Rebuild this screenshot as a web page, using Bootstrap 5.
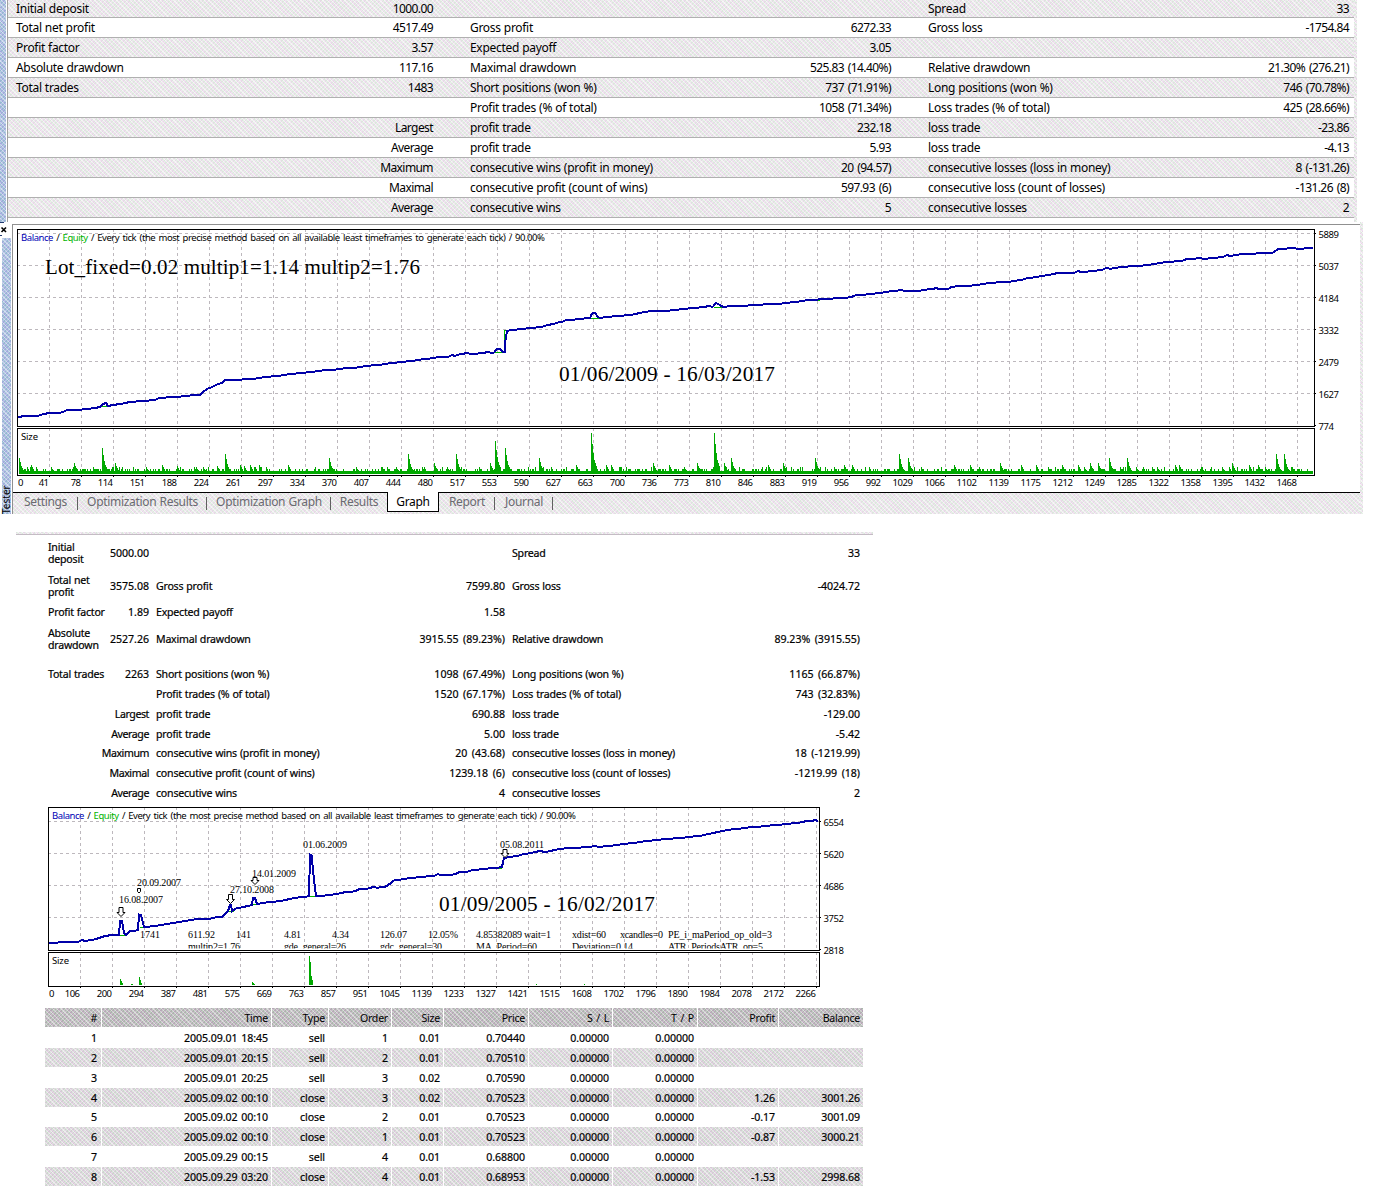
<!DOCTYPE html>
<html lang="en">
<head>
    <meta charset="UTF-8">
    <meta name="viewport" content="width=device-width, initial-scale=1.0">
    <title>Strategy Tester Report</title>
    <link href="https://cdn.jsdelivr.net/npm/bootstrap@5.3.0/dist/css/bootstrap.min.css" rel="stylesheet">
    <style>
        :root {
            --weave: repeating-linear-gradient(45deg, rgba(255, 185, 255, .2) 0 1.1px, rgba(195, 255, 200, .2) 1.1px 2.2px, rgba(255, 255, 255, .5) 2.2px 3.1px),
                     repeating-linear-gradient(135deg, rgba(0, 0, 0, .03) 0 1.3px, rgba(255, 255, 255, .25) 1.3px 2.6px);
        }
        body { font-family: "Noto Sans", "Open Sans", sans-serif; color: #000; background: #fff; overflow: hidden; }
        .dither { background: var(--weave) #e9e7e9; }
        .dither-blue { background: var(--weave) #8dabda; }
        .page { width: 1378px; height: 1190px; }
        .stats-wrap { height: 222px; }
        .side-top { width: 8px; border-right: 1px solid #a0a0a0; }
        .side-top > div { width: 6px; }
        .edge { width: 3px; }

        .table.grid-table { --bs-table-bg: transparent; --bs-table-color: #000; table-layout: fixed; border-collapse: separate; border-spacing: 0; margin: 0; color: #000; }
        .table.grid-table > tbody > tr > td, .table.grid-table > thead > tr > th {
            padding: 0; white-space: nowrap; vertical-align: middle; font-weight: 400; overflow: visible; border: 0; box-shadow: none;
        }
        .stats { width: 1346px; font-size: 12px; line-height: 16px; letter-spacing: -.3px; word-spacing: .3px; }
        .table.stats > tbody > tr > td { height: 20px; border-bottom: 1px solid #b0b0b0; }
        .table.stats > tbody > tr:first-child > td { height: 18px; }
        .table.stats > tbody > tr > td.text-end { letter-spacing: -.58px; word-spacing: 1.2px; }
        .table.stats > tbody > tr > td:first-child { padding-left: 8px; }
        .table.stats > tbody > tr > td:nth-child(3), .table.stats > tbody > tr > td:nth-child(5) { padding-left: 37px; }
        .table.stats > tbody > tr > td:last-child { padding-right: 5px; }

        .tester { height: 292px; }
        .side-mid { width: 12px; }
        .side-mid .close-box { height: 16px; }
        .side-mid .rail { margin-left: 2px; width: 9px; height: 276px; }
        .rail span { writing-mode: vertical-rl; transform: rotate(180deg); font-size: 10px; line-height: 9px; width: 9px; height: 34px; }
        .panel { width: 1348px; height: 290px; margin-top: 2px; border-left: 1px solid #909090; border-top: 1px solid #909090; }
        .tabs { height: 22px; border-top: 1px solid #000; font-size: 12px; line-height: 12px; letter-spacing: -.32px; word-spacing: .5px; }
        .tabs .tab { height: 18px; color: #6a6a70; position: relative; }
        .tabs .tab::after { content: ""; position: absolute; right: 0; top: 4px; width: 1px; height: 13px; background: #606060; }
        .tabs .tab.no-rule::after { display: none; }
        .tabs .tab.current { background: #fff; color: #000; border: 1px solid #000; border-top: 0; margin-top: -1px; height: 20px; }

        svg { display: block; }
        svg text { font-size: 9.5px; }
        .legend-line { word-spacing: 1.2px; }
        .serif { font-family: "Liberation Serif", serif; }

        .report { margin: 18px 0 0 16px; width: 857px; padding-left: 29px; }
        .report-top { margin: 0 0 1px -29px; height: 3px; border-bottom: 1px solid #c4bcc4; }
        .summary { width: 818px; font-size: 10.6px; line-height: 12.5px; letter-spacing: -.22px; word-spacing: .4px; -webkit-text-stroke: .2px #000; }
        .table.summary > tbody > tr > td { height: 19px; }
        .table.summary > tbody > tr > td.text-end { letter-spacing: -.03px; word-spacing: 1.8px; }
        .table.summary > tbody > tr > td[colspan] { letter-spacing: -.42px; }
        .table.summary > tbody > tr > td.wrap { white-space: normal; padding-left: 3px; }
        .table.summary > tbody > tr > td.cap { padding-left: 7px; }
        .table.summary > tbody > tr > td:last-child { padding-right: 3px; }
        .trades { width: 818px; font-size: 10.6px; line-height: 14px; letter-spacing: -.08px; word-spacing: 1.2px; -webkit-text-stroke: .2px #000; }
        .table.trades > thead > tr > th { height: 19px; letter-spacing: -.25px; -webkit-text-stroke: 0; }
        .table.trades > tbody > tr > td { height: 21px; }
        .table.trades > tbody > tr:nth-child(even) > td { height: 19px; }
        .table.trades > tbody > tr:nth-child(5) > td { height: 20px; }
        .table.trades > thead > tr > th, .table.trades > tbody > tr > td { padding-right: 3px; text-align: right; border-right: 1px solid #fff; }
        .table.trades > tbody > tr > td:first-child, .table.trades > thead > tr > th:first-child { padding-right: 4px; }
        .table.trades > tbody > tr > td:last-child, .table.trades > thead > tr > th:last-child { border-right: 0; }
        .table.trades > thead > tr { background: var(--weave) #aaa8aa; }
        .table.trades > tbody > tr:nth-child(even) { background: var(--weave) #d4d2d4; }
    </style>
</head>
<body>
    <div class="page d-flex flex-column">
        <!-- Report of the first run -->
        <div class="stats-wrap d-flex flex-shrink-0">
            <div class="side-top flex-shrink-0"><div class="dither-blue h-100"></div></div>
            <div>
                <table class="table grid-table stats">
                    <colgroup><col style="width:220px"><col style="width:205px"><col style="width:267px"><col style="width:191px"><col style="width:259px"><col style="width:204px"></colgroup>
                    <tbody id="stats-body"></tbody>
                </table>
            </div>
            <div class="edge dither"></div>
        </div>

        <!-- Tester panel -->
        <div class="tester d-flex flex-shrink-0">
            <div class="side-mid d-flex flex-column flex-shrink-0">
                <svg class="close-box" width="12" height="16" viewBox="0 222 12 16">
                    <path d="M0 222.5h4M0 235.5h2" stroke="#223a70"/>
                    <path d="M1.5 227.500l4.500 4.500M6 227.500l-4.500 4.500" stroke="#000" stroke-width="1.600"/>
                </svg>
                <div class="rail dither-blue d-flex align-items-end justify-content-center"><span>Tester</span></div>
            </div>
            <div class="panel flex-shrink-0 d-flex flex-column">
                <svg id="chart-a" width="1347" height="267" viewBox="13 225 1347 267"></svg>
                <div class="tabs dither d-flex align-items-start">
                    <div class="tab d-flex align-items-center justify-content-center" style="width:65px">Settings</div>
                    <div class="tab d-flex align-items-center justify-content-center" style="width:129px">Optimization Results</div>
                    <div class="tab d-flex align-items-center justify-content-center" style="width:124px">Optimization Graph</div>
                    <div class="tab no-rule d-flex align-items-center justify-content-center" style="width:56px">Results</div>
                    <div class="tab no-rule current d-flex align-items-center justify-content-center" style="width:52px">Graph</div>
                    <div class="tab d-flex align-items-center justify-content-center" style="width:56px">Report</div>
                    <div class="tab d-flex align-items-center justify-content-center" style="width:58px">Journal</div>
                </div>
            </div>
            <div class="edge dither"></div>
        </div>

        <!-- Report of the long run -->
        <div class="report">
            <div class="report-top dither"></div>
            <table class="table grid-table summary">
                <colgroup><col style="width:62px"><col style="width:42px"><col style="width:200px"><col style="width:156px"><col style="width:200px"><col style="width:158px"></colgroup>
                <tbody id="summary-body"></tbody>
            </table>
            <svg id="chart-b" width="818" height="204" viewBox="45 804 818 204"></svg>
            <table class="table grid-table trades">
                <colgroup><col style="width:57px"><col style="width:170px"><col style="width:57px"><col style="width:63px"><col style="width:52px"><col style="width:85px"><col style="width:84px"><col style="width:85px"><col style="width:81px"><col style="width:84px"></colgroup>
                <thead><tr><th>#</th><th>Time</th><th>Type</th><th>Order</th><th>Size</th><th>Price</th><th>S / L</th><th>T / P</th><th>Profit</th><th>Balance</th></tr></thead>
                <tbody id="trades-body"></tbody>
            </table>
        </div>
    </div>

    <script src="https://cdn.jsdelivr.net/npm/bootstrap@5.3.0/dist/js/bootstrap.bundle.min.js"></script>
    <script>
        const stats = [
            ['Initial deposit', '1000.00', '', '', 'Spread', '33'],
            ['Total net profit', '4517.49', 'Gross profit', '6272.33', 'Gross loss', '-1754.84'],
            ['Profit factor', '3.57', 'Expected payoff', '3.05', '', ''],
            ['Absolute drawdown', '117.16', 'Maximal drawdown', '525.83 (14.40%)', 'Relative drawdown', '21.30% (276.21)'],
            ['Total trades', '1483', 'Short positions (won %)', '737 (71.91%)', 'Long positions (won %)', '746 (70.78%)'],
            ['', '', 'Profit trades (% of total)', '1058 (71.34%)', 'Loss trades (% of total)', '425 (28.66%)'],
            ['', 'Largest', 'profit trade', '232.18', 'loss trade', '-23.86'],
            ['', 'Average', 'profit trade', '5.93', 'loss trade', '-4.13'],
            ['', 'Maximum', 'consecutive wins (profit in money)', '20 (94.57)', 'consecutive losses (loss in money)', '8 (-131.26)'],
            ['', 'Maximal', 'consecutive profit (count of wins)', '597.93 (6)', 'consecutive loss (count of losses)', '-131.26 (8)'],
            ['', 'Average', 'consecutive wins', '5', 'consecutive losses', '2']
        ];
        document.getElementById('stats-body').innerHTML = stats.map((r, i) =>
            `<tr class="${i % 2 ? '' : 'dither'}">` + r.map((c, j) => `<td class="${j % 2 ? 'text-end' : ''}">${c}</td>`).join('') + '</tr>').join('');

        // last value is the row height
        const summary = [
            ['Initial deposit', '5000.00', '', '', 'Spread', '33', 34],
            ['Total net profit', '3575.08', 'Gross profit', '7599.80', 'Gross loss', '-4024.72', 32],
            ['Profit factor', '1.89', 'Expected payoff', '1.58', '', '', 20],
            ['Absolute drawdown', '2527.26', 'Maximal drawdown', '3915.55 (89.23%)', 'Relative drawdown', '89.23% (3915.55)', 42],
            ['Total trades', '2263', 'Short positions (won %)', '1098 (67.49%)', 'Long positions (won %)', '1165 (66.87%)', 20],
            ['', '', 'Profit trades (% of total)', '1520 (67.17%)', 'Loss trades (% of total)', '743 (32.83%)', 20],
            ['', 'Largest', 'profit trade', '690.88', 'loss trade', '-129.00', 20],
            ['', 'Average', 'profit trade', '5.00', 'loss trade', '-5.42', 20],
            ['', 'Maximum', 'consecutive wins (profit in money)', '20 (43.68)', 'consecutive losses (loss in money)', '18 (-1219.99)', 19],
            ['', 'Maximal', 'consecutive profit (count of wins)', '1239.18 (6)', 'consecutive loss (count of losses)', '-1219.99 (18)', 20],
            ['', 'Average', 'consecutive wins', '4', 'consecutive losses', '2', 21]
        ];
        document.getElementById('summary-body').innerHTML = summary.map(r => {
            const pad = r[6] === 42 ? ' pb-2' : '';
            const first = r[0]
                ? `<td class="wrap${pad}">${r[0]}</td><td class="text-end${pad}">${r[1]}</td>`
                : `<td class="text-end" colspan="2">${r[1]}</td>`;
            return `<tr style="height:${r[6]}px">${first}<td class="cap${pad}">${r[2]}</td><td class="text-end${pad}">${r[3]}</td><td class="cap${pad}">${r[4]}</td><td class="text-end${pad}">${r[5]}</td></tr>`;
        }).join('');

        const trades = [
            ['2005.09.01 18:45', 'sell', 1, '0.01', '0.70440'],
            ['2005.09.01 20:15', 'sell', 2, '0.01', '0.70510'],
            ['2005.09.01 20:25', 'sell', 3, '0.02', '0.70590'],
            ['2005.09.02 00:10', 'close', 3, '0.02', '0.70523', '1.26', '3001.26'],
            ['2005.09.02 00:10', 'close', 2, '0.01', '0.70523', '-0.17', '3001.09'],
            ['2005.09.02 00:10', 'close', 1, '0.01', '0.70523', '-0.87', '3000.21'],
            ['2005.09.29 00:15', 'sell', 4, '0.01', '0.68800'],
            ['2005.09.29 03:20', 'close', 4, '0.01', '0.68953', '-1.53', '2998.68']
        ];
        document.getElementById('trades-body').innerHTML = trades.map((t, i) =>
            '<tr>' + [i + 1, ...t.slice(0, 5), '0.00000', '0.00000'].map(c => `<td>${c}</td>`).join('') +
            (t[5] ? `<td>${t[5]}</td><td>${t[6]}</td>` : '<td colspan="2"></td>') + '</tr>').join('');

        // Frames, dashed grid, axis labels and the legend line shared by both charts
        function frame(o) {
            let s = '<g shape-rendering="crispEdges" fill="none" stroke="#bdb8bd" stroke-dasharray="3 3">';
            for (let x = o.gx; x < o.r; x += 32) s += `<path d="M${x + .5} ${o.t}V${o.b}M${x + .5} ${o.st}V${o.sb}"/>`;
            for (let y = o.gy; y < o.b - 2; y += 32) s += `<path d="M${o.l} ${y + .5}H${o.r}"/>`;
            s += '</g><g shape-rendering="crispEdges" fill="none" stroke="#000">';
            s += `<path d="M${o.l + .5} ${o.t + .5}H${o.r + .5}V${o.b + .5}H${o.l + .5}ZM${o.l + .5} ${o.st + .5}H${o.r + .5}V${o.sb + .5}H${o.l + .5}Z"/>`;
            for (let x = o.gx; x < o.r; x += 32) s += `<path d="M${x + .5} ${o.sb}v2"/>`;
            o.ys.forEach((v, i) => s += `<path d="M${o.r} ${o.gy + i * 32 + .5}h2"/>`);
            s += '</g><g>';
            o.ys.forEach((v, i) => s += `<text x="${o.r + 4.5}" y="${o.gy + i * 32 + 4.5}" textLength="${v > 999 ? 20.5 : 15.5}">${v}</text>`);
            o.xs.forEach((v, i) => s += i
                ? `<text x="${o.gx + (i - 1) * 32}" y="${o.sb + 11}" text-anchor="end" textLength="${String(v).length * 5.1}">${v}</text>`
                : `<text x="${o.l + 1}" y="${o.sb + 11}">0</text>`);
            s += '</g>';
            s += `<text class="legend-line" x="${o.l + 4}" y="${o.t + 12}" textLength="524"><tspan fill="#0000b4">Balance</tspan> / <tspan fill="#00b400">Equity</tspan> / Every tick (the most precise method based on all available least timeframes to generate each tick) / 90.00%</text>`;
            s += `<text x="${o.l + 4}" y="${o.st + 12}" textLength="17">Size</text>`;
            return s;
        }
        function curve(points, flats) {
            const noisy = [];
            points.forEach((p, i) => {
                noisy.push(p);
                const n = points[i + 1];
                if (!n || n[0] - p[0] < 8) return;
                for (let x = p[0] + 3; x < n[0]; x += 3) {
                    const y = p[1] + (n[1] - p[1]) * (x - p[0]) / (n[0] - p[0]);
                    noisy.push([x, Math.round(y * 2) / 2 - (Math.sin(x * 2.7) > .97 ? 1 : 0)]);
                }
            });
            return `<path shape-rendering="crispEdges" d="${flats}" fill="none" stroke="#00b400"/>` +
                `<polyline shape-rendering="crispEdges" points="${noisy.join(' ')}" fill="none" stroke="#0000a8" stroke-width="2"/>`;
        }
        // lot size spikes: each falls off over the next few pixels
        function spikes(list, base, falloff) {
            let d = '';
            list.forEach(([x, top]) => falloff.forEach((k, i) => {
                const h = Math.round((base - top) * k);
                if (h > 0) d += `M${x + i + .5} ${base}v${-h}`;
            }));
            return `<path shape-rendering="crispEdges" d="${d}" stroke="#00a800"/>`;
        }

        const balanceA = [[18,417],[25,416],[38,416],[43,414],[50,413],[60,413],[65,411],[73,410],[82,409.5],[95,408],[100,407],[103,404],[106,403],[108,406],[113,405],[120,404],[130,402],[140,401],[155,400],[160,397.5],[175,397],[190,395.5],[197,394.5],[200,395],[203,392],[207,389],[212,387],[218,384],[222,383],[225,380],[230,380],[250,379],[275,376],[300,373],[330,370],[370,366],[400,362],[430,358.5],[440,357],[455,356],[460,354],[475,353.5],[494,352.5],[497,349],[500,349],[503,352],[505,352],[505.5,340],[507,331],[511,330],[530,328],[540,327],[552,324],[560,322],[575,319.5],[590,318],[592,313.5],[595,313],[598,317],[600,318],[615,316],[630,315],[650,311],[670,310.5],[690,308],[713,306.5],[716,303],[720,305],[723,307],[745,305.5],[770,304],[776,304.5],[790,302.5],[815,299.5],[845,298],[860,295],[880,293],[900,290],[910,291],[918,291],[930,289],[949,288.5],[951,287],[977,285],[990,283],[1008,282],[1030,278],[1048,275],[1066,272.5],[1085,272],[1100,270],[1125,266.5],[1148,265],[1165,262],[1183,260.5],[1187,259],[1215,258],[1235,255],[1260,253],[1273,252.5],[1278,249],[1290,248],[1298,248.5],[1313,248]];
        const sizesA = [[19,458],[31,465],[51,467],[74,463],[93,467],[102,448],[115,463],[146,467],[162,465],[177,466],[196,467],[203,467],[217,466],[225,454],[240,465],[244,466],[250,465],[259,465],[288,465],[329,458],[356,467],[396,467],[408,454],[422,467],[434,463],[447,467],[456,454],[479,467],[490,463],[495,441],[505,448],[539,458],[576,465],[591,433],[606,465],[611,465],[653,463],[669,465],[684,467],[697,463],[714,433],[724,463],[731,458],[768,465],[783,463],[815,458],[834,467],[844,465],[852,465],[899,454],[908,458],[954,465],[970,465],[1000,463],[1021,465],[1036,465],[1048,467],[1062,465],[1078,465],[1084,467],[1090,463],[1098,463],[1109,458],[1127,458],[1136,467],[1157,467],[1175,465],[1179,465],[1201,467],[1222,467],[1232,463],[1249,465],[1258,465],[1265,467],[1276,454],[1284,454],[1292,467]];
        let noise = '';
        for (let x = 19; x < 1313; x++) {
            const r = Math.abs(Math.sin(x * 12.9898) * 43758.5453) % 1;
            noise += `M${x + .5} 474v${r > .95 ? -7 : r > .62 ? -5 : -3}`;
        }
        document.getElementById('chart-a').innerHTML = frame({
            l: 17, r: 1314, t: 229, b: 426, st: 428, sb: 475, gx: 49, gy: 233,
            ys: [5889, 5037, 4184, 3332, 2479, 1627, 774],
            xs: [0,41,78,114,151,188,224,261,297,334,370,407,444,480,517,553,590,627,663,700,736,773,810,846,883,919,956,992,1029,1066,1102,1139,1175,1212,1249,1285,1322,1358,1395,1432,1468]
        }) + curve(balanceA, 'M102 406.500h6M495 352.500h8M504.500 342V330.500h4M591 318.500h8M714 307.500h8M160 398.500h5M816 300.500h4') +
            `<path shape-rendering="crispEdges" d="${noise}" stroke="#00a800"/>` + spikes(sizesA, 474, [1, .74, .5, .35, .26, .2]) +
            '<g class="serif"><text x="45" y="274" textLength="375" style="font-size:21px">Lot_fixed=0.02 multip1=1.14 multip2=1.76</text>' +
            '<text x="559" y="381" textLength="216" style="font-size:21.300px">01/06/2009 - 16/03/2017</text></g>';

        const balanceB = [[49,943],[70,942],[85,941],[96,939],[105,936],[112,935],[119,935],[120,921],[122,921],[124,933],[126,935],[130,931],[138,930],[139,914.5],[141,915],[144,927],[155,926],[170,923.5],[190,920],[205,919],[222,917],[228,911],[230,905],[231,905],[232,911],[235,909],[248,906],[252,905],[253,898],[255,898],[257,904],[270,902],[280,901],[295,898],[309,896],[310,854.5],[311.5,855],[314,880],[316,896],[330,895],[350,892],[370,888],[385,887],[395,880],[420,877],[440,875],[450,875],[470,871],[490,868],[502,867],[503,862],[504,858],[516,856],[530,853],[540,851],[545,852],[560,849],[585,847],[610,846],[625,844],[640,842],[655,840],[690,837],[705,835],[722,831],[735,829],[755,827],[785,824],[803,822],[806,821],[818,821]];
        const params = [
            [140, '1741', 20], [188, '611.92', 27], [236, '141', 15], [284, '4.81', 17], [332, '4.34', 17], [380, '126.07', 27], [428, '12.05%', 30],
            [476, '4.85382089', 46], [524, 'wait=1', 27], [572, 'xdist=60', 34], [620, 'xcandles=0', 43], [668, 'PE_i_maPeriod_op_old=3', 104]
        ];
        const paramsCut = [[188, 'multip2=1.76', 52], [284, 'gde_general=26', 62], [380, 'gdc_general=30', 62], [476, 'MA_Period=60', 61], [572, 'Deviation=0.14', 61], [668, 'ATR_PeriodsATR_op=5', 95]];
        const dates = [[119, 903, '16.08.2007'], [137, 886, '20.09.2007'], [230, 893, '27.10.2008'], [252, 877, '14.01.2009'], [303, 848, '01.06.2009'], [500, 848, '05.08.2011']];
        const arrow = (x, y, h) => `<path d="M${x - 2} ${y}h4v${h - 4}h2l-4 4l-4 -4h2z" fill="#fff" stroke="#000"/>`;
        document.getElementById('chart-b').innerHTML = '<defs><clipPath id="cut"><path d="M49 940H818V948.500H49Z"/></clipPath></defs>' + frame({
            l: 48, r: 819, t: 807, b: 950, st: 952, sb: 986, gx: 80, gy: 821,
            ys: [6554, 5620, 4686, 3752, 2818],
            xs: [0,106,200,294,387,481,575,669,763,857,951,1045,1139,1233,1327,1421,1515,1608,1702,1796,1890,1984,2078,2172,2266]
        }) + curve(balanceB, 'M119 935.500h6M140 927.500h5M229 911.500h5M252 904.500h5M309 896.500h7M498 868.500h4') +
            spikes([[120,979],[131,984],[139,977],[252,982]], 985, [1, .6, .3]) +
            spikes([[309,956]], 985, [1, .8, .3, .18]) +
            '<path shape-rendering="crispEdges" d="M536 984.500h1M584 984.500h1" stroke="#00a800"/>' +
            arrow(121, 907.5, 9) + arrow(230.5, 894.5, 9) + arrow(255, 877.5, 7) + arrow(505, 849.5, 8) +
            '<path d="M137.500 888.500h3v3l-1.500 1.500l-1.500 -1.500z" fill="#fff" stroke="#000"/>' +
            '<g class="serif">' + dates.map(d => `<text x="${d[0]}" y="${d[1]}" textLength="44" style="font-size:10px">${d[2]}</text>`).join('') +
            params.map(p => `<text x="${p[0]}" y="938" textLength="${p[2]}" style="font-size:10px">${p[1]}</text>`).join('') +
            '<g clip-path="url(#cut)">' + paramsCut.map(p => `<text x="${p[0]}" y="950" textLength="${p[2]}" style="font-size:10px">${p[1]}</text>`).join('') + '</g>' +
            '<text x="439" y="911" textLength="216" style="font-size:21.300px">01/09/2005 - 16/02/2017</text></g>';
    </script>
</body>
</html>
